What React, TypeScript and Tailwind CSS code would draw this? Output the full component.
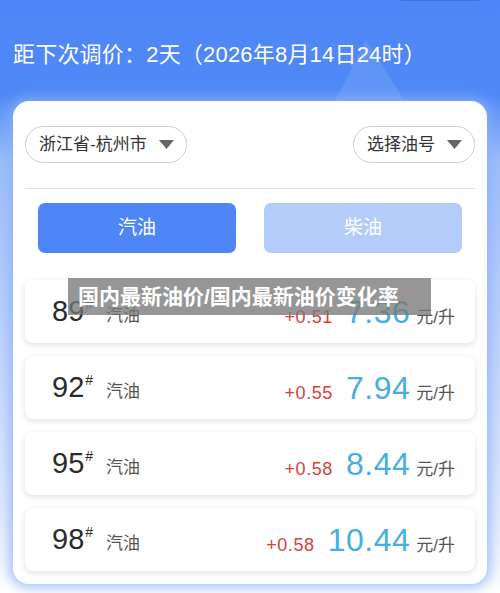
import React from "react";

const rows = [
  { no: "89", diff: "+0.51", price: "7.36" },
  { no: "92", diff: "+0.55", price: "7.94" },
  { no: "95", diff: "+0.58", price: "8.44" },
  { no: "98", diff: "+0.58", price: "10.44" },
];

const font = { fontFamily: '"Liberation Sans", "Noto Sans CJK SC", sans-serif' };

function Tri() {
  return (
    <svg width="15" height="9" viewBox="0 0 15 9" className="shrink-0">
      <path d="M0 0 H15 L7.5 9 Z" fill="#666666" />
    </svg>
  );
}

export default function App() {
  return (
    <div
      className="relative w-[500px] h-[593px] overflow-hidden bg-[linear-gradient(to_bottom,#4f86f7_0px,#5089f6_95px,#9dbcf9_160px,#c3d6fb_360px,#e4ecfd_520px,#ffffff_593px)]"
      style={font}
    >
      <svg className="absolute left-[325px] top-[35px]" width="90" height="70" viewBox="0 0 90 70">
        <path d="M41 5 L8 70 H82 Z" fill="#a6cdf3" opacity="0.2" />
      </svg>
      <div className="absolute left-[400px] top-[-4px] w-[80px] h-[5px] rounded-full bg-[#3a64b8] opacity-60" />
      <div className="relative h-[101px] pl-[13px] pt-[40px]">
        <div className="text-[22px] leading-[30px] text-white tracking-[0.2px]">
          距下次调价：2天（2026年8月14日24时）
        </div>
      </div>
      <div className="relative mx-[13px] rounded-[16px] bg-white px-[12px] pt-[25px] pb-[13px] shadow-[0_0_12px_4px_rgba(140,175,250,0.75)]">
        <div className="flex items-center justify-between">
          <div className="flex h-[37px] w-[162px] items-center gap-[12px] rounded-full border border-[#cfcfcf] pl-[13px]">
            <span className="text-[17px] text-[#333333]">浙江省-杭州市</span>
            <Tri />
          </div>
          <div className="flex h-[37px] w-[122px] items-center gap-[12px] rounded-full border border-[#cfcfcf] pl-[13px]">
            <span className="text-[17px] text-[#333333]">选择油号</span>
            <Tri />
          </div>
        </div>
        <div className="mt-[25px] h-px bg-[#e2e2e2]" />
        <div className="mt-[14px] flex gap-[28px] px-[13px]">
          <div className="flex h-[50px] flex-1 items-center justify-center rounded-[7px] bg-[#4f86f7] text-[19px] text-white">
            汽油
          </div>
          <div className="flex h-[50px] flex-1 items-center justify-center rounded-[7px] bg-[#b3ccf9] text-[19px] text-white">
            柴油
          </div>
        </div>
        <div className="mt-[27px] flex flex-col gap-[13px]">
          {rows.map((r) => (
            <div
              key={r.no}
              className="flex h-[63px] items-center rounded-[8px] bg-white pl-[27px] pr-[20px] shadow-[0_2px_6px_rgba(0,0,0,0.12)]"
            >
              <div className="flex items-baseline">
                <span className="text-[29px] leading-none text-[#2b2b2b]">{r.no}</span>
                <span className="relative top-[-12px] ml-[1px] text-[14px] leading-none text-[#2b2b2b]">#</span>
                <span className="ml-[13px] text-[17px] leading-none text-[#555555]">汽油</span>
              </div>
              <div className="ml-auto flex items-baseline">
                <span className="text-[18px] leading-none tracking-[0.6px] text-[#d6413c]">{r.diff}</span>
                <span className="ml-[13px] text-[32px] leading-none tracking-[0.5px] text-[#47afe0]">{r.price}</span>
                <span className="ml-[6px] text-[17px] leading-none text-[#555555]">元/升</span>
              </div>
            </div>
          ))}
        </div>
      </div>
      <div className="absolute left-[68px] top-[278px] flex h-[37px] w-[363px] items-center bg-[rgba(120,120,120,0.78)] pl-[10px]">
        <span className="text-[21px] font-bold text-white">国内最新油价/国内最新油价变化率</span>
      </div>
    </div>
  );
}
